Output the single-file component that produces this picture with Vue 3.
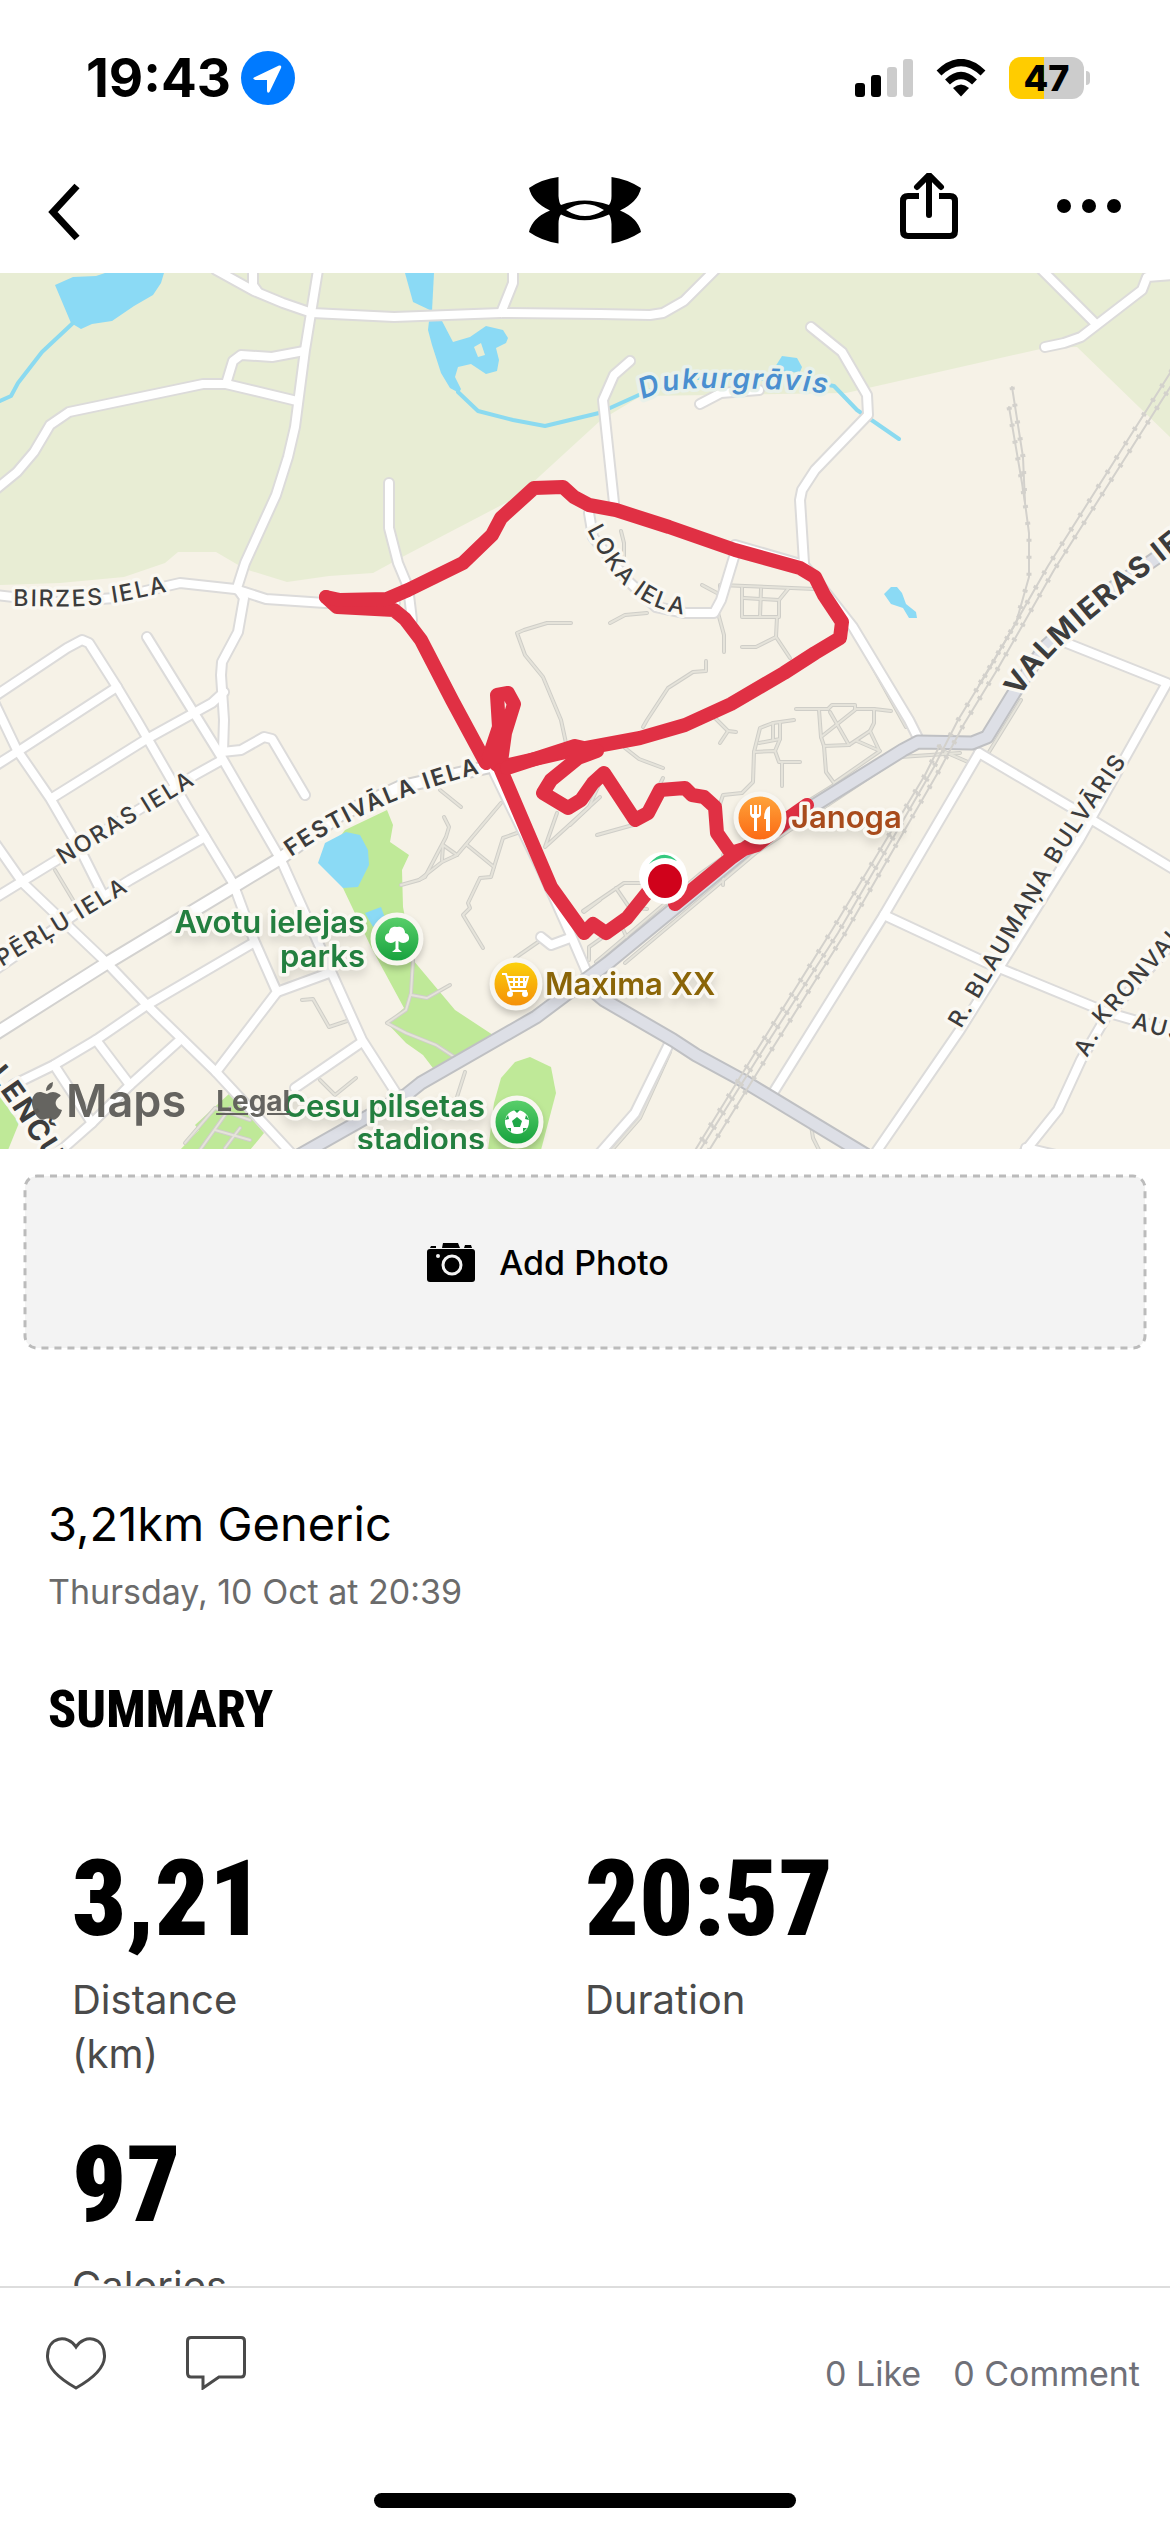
<script setup>
const water = [
  'M55 285L73 277L96 276L105 273H164L161 283L153 295L134 306L112 321L92 324L81 329L71 323Z',
  'M405 273H434L432 311L413 302Z',
  'M429 321H442L453 342L470 337L486 326L503 330L508 338L506 343L496 348L499 360L497 371L486 374L471 364L458 367L455 377L461 389L459 393L450 388L441 373L432 345L428 330ZM474 347L478 357L485 355L481 343Z',
  'M775 367L782 356L797 358L802 367L800 372L784 373Z',
  'M884 594L891 587L897 587L902 593L906 604L916 612L917 618L909 618L903 608L891 604Z',
  'M346 832L360 835L368 850L369 865L358 887L343 888L318 863L325 843Z',
  'M365 913L381 907L385 918L373 927Z'
]
const streams = [
  '73,323 42,352 18,383 11,396 0,401',
  '458,392 478,411 513,420 545,426 599,413 641,394 685,378 742,378 800,380 834,386 857,410 899,439'
]
const parks = [
  '387,810 393,825 390,842 409,855 402,870 403,907 413,960 455,1010 496,1037 436,1072 423,1055 406,1043 387,1023 404,1008 371,947 343,888 330,850 345,830',
  '515,1062 530,1057 551,1067 556,1093 541,1150 488,1150 494,1103 501,1078',
  '230,1093 195,1125 199,1130 180,1150 250,1150 264,1133',
  '0,1097 19,1123 8,1150 0,1150'
]
const paths = [
  '571,623 547,623 524,630 517,633 525,655 543,677 561,720 566,743',
  '621,531 624,543 624,563', '702,585 717,593', '720,600 720,585 815,589',
  '742,588 742,617 779,617 779,600 788,589', '761,589 760,617', '744,598 779,600',
  '777,617 776,637 790,658', '776,637 756,647 742,647', '718,613 724,635 724,652',
  '610,623 625,615 647,613', '706,661 706,671 693,672 668,688 647,720 643,727',
  '796,709 828,709', '855,709 874,709 891,711',
  '828,709 832,705 855,705 855,710 821,737 819,710', '830,712 849,745',
  '821,737 824,746 849,745 870,731 874,723 874,709',
  '857,741 880,751 834,783 826,772 824,746', '870,731 879,750',
  '794,720 773,723 760,728 754,752 753,782 742,793 723,795 718,810',
  '780,723 780,739 759,743', '773,723 773,740', '754,752 775,751 779,762 800,762',
  '782,762 782,786', '780,739 775,751', '715,718 728,731 736,732', '728,731 720,743',
  '625,748 639,759 663,768', '663,778 656,792', '633,825 597,835', '602,778 589,807 570,825',
  '583,911 624,883 643,883', '616,888 629,907 647,909', '622,927 627,938',
  '589,960 589,947 606,935', '723,855 723,885', '945,752 968,762', '1021,700 989,752',
  '811,1125 813,1138 819,1150', '440,790 461,807',
  '444,817 449,827 446,837 425,877 419,880 401,885', '501,803 457,855 442,862 419,880',
  '442,860 443,845 457,855', '467,845 494,867 491,877 480,878 468,903 470,908 463,915 483,948',
  '517,833 503,838 494,867', '515,958 541,940',
  '413,960 411,993 406,1010 387,1023 406,1033 436,1045 459,1060', '411,995 427,998 450,985',
  '302,1000 313,999 329,1027 350,1020', '320,1080 335,1095 356,1078', '465,1072 457,1097',
  '55,870 73,900', '557,813 545,847 600,797', '584,912 600,900', '853,632 870,662 906,727',
  '596,962 700,874 765,828 834,785', '625,963 757,852 900,757 960,753',
  '185,1143 215,1108 250,1120', '200,1150 230,1108', '215,1130 250,1140', '225,1148 240,1128', '670,1052 640,1118 612,1150'
]
const roads = [
  '216,270 254,291 283,303 312,313 394,317 501,313 600,314 650,315 663,313 684,301 715,270',
  '253,270 253,285 258,292',
  '318,270 305,350 295,427 288,457 276,495 245,563 237,588 244,598 238,632 222,662 221,675 224,720 223,752',
  '-5,490 17,472 34,452 50,425 69,412 203,384 226,384 297,401',
  '226,384 233,361 241,355 272,357 304,351', '501,313 513,283 513,270',
  '-5,595 57,602 115,598 180,583 235,589 266,599 325,603 395,603',
  '389,483 389,528 398,563 408,587 412,620',
  '147,637 186,700 222,758 281,860 329,967 362,1040 396,1093',
  '-5,696 67,648 82,640 89,643 117,687 138,722 187,807 233,883 254,940 277,992 216,1072',
  '117,687 17,752 -5,766', '224,692 212,703 145,740 52,798',
  '222,752 241,750 264,737 272,739 305,795', '222,760 195,775 57,860 -5,898',
  '-5,704 17,750 50,798 82,853 103,895', '-5,843 23,883 107,963 147,1005 216,1072 291,1153',
  '205,837 130,880 77,913 -5,970', '13,1085 54,1065 96,1040 147,1005 253,943',
  '277,992 329,973', '96,1040 130,1085', '180,1040 130,1085 92,1123 58,1153', '54,1065 92,1123',
  '362,1042 295,1088', '494,772 543,873 570,933 588,975', '541,937 551,945 570,938',
  '630,361 614,375 603,400 614,503',
  '811,327 842,352 867,395 868,415 815,470 802,490 800,500 804,563',
  '700,404 721,393 759,390', '1042,270 1094,322', '1045,347 1064,343 1081,337 1142,290 1147,277 1175,275',
  '589,513 593,537 627,580 656,607 685,613 714,613 721,600 734,557',
  '735,545 804,565 853,627 909,720 920,742', '1064,642 1167,683 1079,840 960,1030 874,1155',
  '979,753 1079,812 1175,870', '979,753 884,915 773,1093', '884,915 987,963 1106,1012 1175,1032',
  '1175,940 1106,1017 1081,1060 1058,1110 1022,1155', '1026,1148 1060,1156',
  '671,1040 635,1113 600,1153'
]
const mainRoads = ['-5,1034 107,963 233,887 281,858 340,815 400,787 497,765']
const highways = [
  '1175,545 1100,597 1045,647 1014,693 987,737 972,743 918,742 903,750 754,843 608,963 536,1017 421,1083 406,1095 300,1155',
  '586,985 604,1000 673,1040 696,1055 742,1080 866,1155'
]
const rails = [
  '1172,370 1048,566 991,666 958,720 934,767 838,933 761,1053 700,1150',
  '1176,378 1054,570 997,670 964,724 940,769 844,935 767,1057 708,1152',
  '940,745 925,775 832,930 755,1053 694,1152',
  '1012,387 1023,457 1025,503 1029,533 1029,577 1016,623 979,685',
  '1009,407 1022,483 1025,503'
]
const route = [
  '326,597 337,607 394,610 405,619 421,640 452,700 486,763',
  '326,597 340,600 387,599 408,590 463,563 492,535 501,518 534,488 563,487 574,497 589,505 616,510 669,527 735,550 800,568 815,577 824,595 842,622 840,638 815,653 784,673 731,704 685,725 640,738 570,751 500,767',
  '501,762 505,733 514,704 508,693 497,695 499,727 489,757 497,765',
  '501,770 551,887 584,933 593,924 606,933 627,918 647,893 662,880',
  '675,904 731,858 757,840 807,805 757,845 731,853 717,833 715,807 704,797 692,795 685,788 660,790 648,813 635,820 604,773 593,783 581,800 568,808 543,793 551,780 578,758 597,751 575,746 507,768'
]
const streets = [
  { id: 'birzes', d: 'M13 606C45 606 75 608 105 604S145 596 195 586', t: 'BIRZES IELA' },
  { id: 'noras', d: 'M63 865L220 769', t: 'NORAS IELA' },
  { id: 'perlu', d: 'M2 967L160 872', t: 'PĒRĻU IELA' },
  { id: 'festivala', d: 'M291 857C350 816 420 786 510 766', t: 'FESTIVĀLA IELA', semi: true },
  { id: 'loka', d: 'M587 530C605 562 628 620 715 616', t: 'LOKA IELA' },
  { id: 'valmieras', d: 'M1020 697C1048 648 1100 612 1210 524', t: 'VALMIERAS IELA', big: true },
  { id: 'blaumana', d: 'M961 1029L1066 850L1150 727', t: 'R. BLAUMAŅA BULVĀRIS' },
  { id: 'kronvalda', d: 'M1087 1058L1108 1020L1200 918', t: 'A. KRONVALDA' },
  { id: 'ausekla', d: 'M1131 1028L1260 1062', t: 'AUSEKĻA' },
  { id: 'lencu', d: 'M-12 1076C10 1100 24 1128 62 1186', t: 'ĻENČU', big: true }
]
const stats = [
  { value: '3,21', label: 'Distance (km)' },
  { value: '20:57', label: 'Duration' },
  { value: '97', label: 'Calories' }
]
</script>

<template>
  <div class="page">
    <div class="status">
      <div class="clock">
        <span>19:43</span>
        <svg width="54" height="54" viewBox="0 0 54 54" aria-hidden="true"><circle cx="27" cy="27" r="27" fill="#007aff" /><path d="M13 26.5L38 14.5Q41 14 40 17L28.500 41Q26.500 43 26 40V29H14.500Q11 28 13 26.500Z" fill="#fff" /></svg>
      </div>
      <div class="signals">
        <svg width="58" height="38" viewBox="0 0 58 38" aria-hidden="true"><rect y="24" width="10" height="14" rx="3" /><rect x="16" y="16" width="10" height="22" rx="3" /><rect x="32" y="8" width="10" height="30" rx="3" fill="#ccc" /><rect x="48" width="10" height="38" rx="3" fill="#ccc" /></svg>
        <svg width="50" height="38" viewBox="0 0 50 38" aria-hidden="true"><g fill="none" stroke="#000" stroke-width="7"><path d="M3 14Q25 -7 47 14" /><path d="M11.500 23Q25 10 38.500 23" /></g><path d="M17 29Q25 22 33 29L25 37.500Z" /></svg>
        <div class="battery"><b>47</b></div>
      </div>
    </div>

    <header class="bar">
      <button type="button" aria-label="Back"><svg width="34" height="58" viewBox="0 0 34 58"><path d="M29 3L5 29L29 55" fill="none" stroke="#000" stroke-width="7" /></svg></button>
      <svg class="logo" width="114" height="68" viewBox="0 0 114 68" role="img" aria-label="Under Armour"><path d="M1 12Q14 3 30.500 1V20Q31 27 33 29Q56 20 81 29Q83.500 26 83.500 20V1Q99 3 113 12Q110 26 92 34.500Q110 42 113 56Q99 65 83.500 67.500V48Q83 41 81 38.500Q56 50 33 38.500Q30.500 41 30.500 48V67.500Q14 65 1 56Q4 42 22 34.500Q4 26 1 12ZM38 34Q57 46 76 34Q57 22 38 34Z" fill-rule="evenodd" /></svg>
      <div class="tools">
        <button type="button" aria-label="Share"><svg width="58" height="78" viewBox="0 0 58 78"><g fill="none" stroke="#000" stroke-width="6"><path d="M19 23H8Q3 23 3 28V58Q3 63 8 63H50Q55 63 55 58V28Q55 23 50 23H39" /><path d="M29 42V3M17 14L29 2L41 14" stroke-linecap="round" /></g></svg></button>
        <button type="button" aria-label="More"><svg width="66" height="26" viewBox="0 0 66 26"><circle cx="8" cy="7" r="7" /><circle cx="33" cy="7" r="7" /><circle cx="58" cy="7" r="7" /></svg></button>
      </div>
    </header>

    <main>
      <div class="map">
        <svg class="canvas" viewBox="0 273 1170 876" role="img" aria-label="Workout route">
          <defs>
            <linearGradient id="green" x2="0" y2="1"><stop stop-color="#5cd16c" /><stop offset="1" stop-color="#14a03c" /></linearGradient>
            <linearGradient id="yellow" x2="0" y2="1"><stop stop-color="#fcd40c" /><stop offset="1" stop-color="#f48c08" /></linearGradient>
            <linearGradient id="orange" x2="0" y2="1"><stop stop-color="#ffa63c" /><stop offset="1" stop-color="#fb6712" /></linearGradient>
            <path v-for="s in streets" :id="s.id" :key="s.id" :d="s.d" />
            <path id="river" d="M643 400C668 385 710 388 760 389S815 391 870 403" />
          </defs>
          <rect y="273" width="1170" height="876" fill="#f6f2e7" />
          <path d="M0 273H1170V437L1077 347L1045 348L846 393L641 396L601 420L517 497L406 555L373 573L329 576L287 582L245 569L216 552H178L165 563L124 577L60 583L0 585Z" fill="#e8edd4" />
          <polygon v-for="p in parks" :key="p" :points="p" fill="#bfe998" />
          <path v-for="p in water" :key="p" :d="p" fill="#8bdaf5" />
          <g class="line">
            <polyline v-for="p in streams" :key="p" :points="p" stroke="#8bdaf0" stroke-width="4" />
            <polyline v-for="p in paths" :key="p" :points="p" stroke="#cfcec8" stroke-width="4" />
            <polyline v-for="p in paths" :key="p + 'i'" :points="p" stroke="#e5e3da" stroke-width="2" />
            <polyline v-for="p in roads" :key="p" :points="p" stroke="#dcdbda" stroke-width="12" />
            <polyline v-for="p in mainRoads" :key="p" :points="p" stroke="#d3d2d0" stroke-width="15" />
            <polyline v-for="p in roads" :key="p + 'i'" :points="p" stroke="#fff" stroke-width="8" />
            <polyline v-for="p in mainRoads" :key="p + 'i'" :points="p" stroke="#fff" stroke-width="11" />
            <polyline v-for="p in highways" :key="p" :points="p" stroke="#bfc0c3" stroke-width="15" />
            <polyline v-for="p in highways" :key="p + 'i'" :points="p" stroke="#dddfe6" stroke-width="11" />
            <polyline v-for="p in rails" :key="p" :points="p" stroke="#d3d1cc" stroke-width="2" />
            <polyline v-for="p in rails" :key="p + 't'" :points="p" class="ties" stroke="#d3d1cc" stroke-width="5" />
            <polyline v-for="p in route" :key="p" :points="p" stroke="#e03044" stroke-width="14" />
          </g>
          <circle cx="663" cy="876" r="24" fill="#fff" /><circle cx="665" cy="881" r="23" fill="#fff" />
          <path d="M649 864Q663 847 677 861Q663 854 649 864Z" fill="#35c980" />
          <circle cx="665" cy="881" r="17" fill="#d0021b" />

          <text v-for="s in streets" :key="s.id" class="street" :class="{ big: s.big, semi: s.semi }"><textPath :href="'#' + s.id">{{ s.t }}</textPath></text>
          <text class="river"><textPath href="#river">Dukurgrāvis</textPath></text>

          <g class="poi">
            <text x="365" y="933" text-anchor="end" fill="#237f3f">Avotu ielejas</text>
            <text x="365" y="967" text-anchor="end" fill="#237f3f">parks</text>
            <text x="485" y="1117" text-anchor="end" fill="#237f3f">Cesu pilsetas</text>
            <text x="485" y="1150" text-anchor="end" fill="#237f3f">stadions</text>
            <text x="545" y="995" fill="#8a6508">Maxima XX</text>
            <text x="791" y="828" fill="#a84b1c">Janoga</text>
          </g>
          <g class="pin" transform="translate(397 939)"><circle r="24" fill="url(#green)" /><path d="M-11 2A5 5 0 0 1 -8 -6A6 6 0 0 1 0 -12A6 6 0 0 1 8 -6A5 5 0 0 1 11 2Q6 6 1.500 2V10L5 13H-5L-1.500 10V2Q-6 6 -11 2Z" fill="#fff" /></g>
          <g class="pin" transform="translate(516 984)"><circle r="24" fill="url(#yellow)" /><g fill="none" stroke="#fff" stroke-width="2"><path d="M-14 -10H-10L-5 7H11M-9 -7H12L9 3H-6M-8 -2H11M-2 -7V3M3 -7V3M8 -7V3" /></g><circle cx="-6" cy="10" r="3" fill="#fff" /><circle cx="9" cy="10" r="3" fill="#fff" /></g>
          <g class="pin" transform="translate(760 818)"><circle r="24" fill="url(#orange)" /><path d="M-10 -13V-4Q-9 0 -6 0V13H-3V0Q1 -1 1 -4V-13H-1V-4H-3V-13H-6V-4H-8V-13ZM10 -12Q4 -10 4 1H6V13H10Z" fill="#fff" /></g>
          <g class="pin" transform="translate(517 1122)"><circle r="24" fill="url(#green)" /><circle r="12" fill="#fff" /><path d="M0 -5L5 -1L3 5H-3L-5 -1ZM-3 -12H3L0 -9ZM9 -7L12 -2L8 -3ZM-9 -7L-12 -2L-8 -3ZM10 6L6 10L6 6ZM-10 6L-6 10L-6 6Z" fill="#1fa848" /></g>
        </svg>
        <div class="credit">
          <svg width="30" height="38" viewBox="0 0 30 38" aria-hidden="true"><path d="M21 0Q21 8 14 9Q14 2 21 0ZM15 12Q21 8 27 12Q29 13 28.500 14Q21 19 25 25Q27 28 30 28Q28 35 23 37.500Q20 38 17 36.500Q15 36 12 37.500Q8 39 4 33Q-1 25 0 18Q2 9 9 10Q12 11 15 12Z" /></svg>
          <span>Maps</span>
          <a href="#legal">Legal</a>
        </div>
      </div>

      <button type="button" class="photo">
        <svg class="outline" aria-hidden="true"><rect width="100%" height="100%" rx="12" /></svg>
        <svg width="48" height="39" viewBox="0 0 48 39" aria-hidden="true"><path d="M16 0H31L33 5H15ZM4 3H9V5H3ZM38 2H44L45 5H37Z" /><rect y="6" width="48" height="33" rx="3" /><circle cx="25" cy="22" r="9" fill="none" stroke="#f3f3f3" stroke-width="3" /><circle cx="11" cy="13" r="2" fill="#f3f3f3" /></svg>
        <span>Add Photo</span>
      </button>

      <section class="intro">
        <h1>3,21km Generic</h1>
        <p>Thursday, 10 Oct at 20:39</p>
        <h2>SUMMARY</h2>
      </section>

      <dl class="stats">
        <div v-for="s in stats" :key="s.label">
          <dt>{{ s.label }}</dt>
          <dd>{{ s.value }}</dd>
        </div>
      </dl>
    </main>

    <footer>
      <div class="actions">
        <button type="button" aria-label="Like"><svg width="60" height="54" viewBox="0 0 60 54"><path d="M30 11C22 -2 1 0 1.500 21C2 33 14 43 30 52C46 43 58 33 58.500 21C59 0 38 -2 30 11Z" /></svg></button>
        <button type="button" aria-label="Comment"><svg width="60" height="54" viewBox="0 0 60 54"><path d="M5 1.500H55Q58.500 1.500 58.500 5V37Q58.500 41 55 41H33L17 52V41H5Q1.500 41 1.500 37V5Q1.500 1.500 5 1.500Z" /></svg></button>
        <div class="counts"><span>0 Like</span><span>0 Comment</span></div>
      </div>
      <div class="home"></div>
    </footer>
  </div>
</template>

<style>
body { margin: 0; background: #fff; }
</style>

<style scoped>
.page { height: 100vh; display: flex; flex-direction: column; background: #fff; color: #000; font-family: Inter, "Liberation Sans", sans-serif; }
button { border: 0; padding: 0; margin: 0; background: none; color: inherit; font: inherit; cursor: pointer; }
svg { display: block; }
.status { flex: none; height: 156px; box-sizing: border-box; padding: 0 86px; display: flex; justify-content: space-between; align-items: center; }
.clock, .signals { display: flex; align-items: center; }
.clock { gap: 10px; font-size: 53px; font-weight: 700; }
.signals { gap: 23px; }
.battery { position: relative; width: 75px; height: 42px; border-radius: 12px; background: linear-gradient(90deg, #ffcc00 47%, #cccccc 47%); display: flex; align-items: center; justify-content: center; font-size: 36px; }
.battery b { font-weight: 800; }
.battery::after { content: ""; position: absolute; right: -6px; top: 14px; width: 4px; height: 14px; border-radius: 0 4px 4px 0; background: #cccccc; }
.bar { flex: none; height: 117px; box-sizing: border-box; padding: 0 48px 6px; display: grid; grid-template-columns: 1fr auto 1fr; align-items: center; }
.bar > button { justify-self: start; }
.logo { margin-bottom: 4px; }
.tools { display: flex; justify-content: flex-end; align-items: center; gap: 98px; }
main { flex: 1; min-height: 0; overflow: hidden; display: flex; flex-direction: column; }
main > * { flex: none; }
.map { position: relative; }
.canvas { width: 100%; height: auto; }
.line polyline { fill: none; stroke-linejoin: round; stroke-linecap: round; }
.line .ties { stroke-linecap: butt; stroke-dasharray: 3 14; }
text { paint-order: stroke; stroke: #faf8f2; stroke-width: 7px; stroke-linejoin: round; }
.street { font-size: 23px; font-weight: 500; letter-spacing: 2px; fill: #3c3c3c; }
.semi { font-weight: 600; }
.big { font-size: 29px; font-weight: 700; }
text.river { font-size: 28px; font-weight: 600; font-style: italic; letter-spacing: 2px; fill: #4a8fd0; stroke: #e9f1ea; }
.poi { font-size: 31px; font-weight: 600; filter: drop-shadow(0 6px 4px rgba(0, 0, 0, 0.1)); }
.pin { filter: drop-shadow(0 4px 3px rgba(0, 0, 0, 0.2)); }
.pin > circle:first-child { stroke: #f8f6f0; stroke-width: 5px; }
.credit { position: absolute; left: 32px; bottom: 20px; display: flex; align-items: center; color: #5e5d59; fill: #5e5d59; opacity: 0.95; }
.credit span { margin-left: 4px; font-size: 45px; line-height: 56px; font-weight: 600; }
.credit a { margin-left: 30px; color: inherit; font-size: 28px; font-weight: 700; }
.photo { position: relative; height: 172px; margin: 27px 25px 0; padding-right: 74px; box-sizing: border-box; border-radius: 12px; background: #f3f3f3; display: flex; align-items: center; justify-content: center; gap: 24px; font-size: 34px; font-weight: 500; }
.outline { position: absolute; inset: 0; width: 100%; height: 100%; overflow: visible; fill: none; stroke: #bbbbbb; stroke-width: 3px; stroke-dasharray: 7 6; }
.intro { margin: 146px 48px 0; }
h1, h2, p, dl, dd { margin: 0; }
h1 { font-size: 47px; line-height: 60px; font-weight: 400; }
p { margin-top: 16px; font-size: 34px; line-height: 44px; color: #6b6b6b; }
h2 { margin-top: 66px; font-family: "Liberation Sans Narrow", "Roboto Condensed", "Liberation Sans", sans-serif; font-size: 52px; line-height: 60px; font-weight: 800; }
.stats { margin: 109px 72px 0; display: grid; grid-template-columns: 1fr 1fr; row-gap: 54px; }
.stats div { display: flex; flex-direction: column-reverse; justify-content: flex-end; gap: 24px; }
dt { max-width: 240px; font-size: 40px; line-height: 54px; color: #4a4a4a; }
dd { font-family: "Liberation Sans Narrow", "Roboto Condensed", "Liberation Sans", sans-serif; font-size: 106px; line-height: 100px; font-weight: 900; }
footer { flex: none; height: 246px; box-sizing: border-box; border-top: 2px solid #dddddd; background: #fff; display: flex; flex-direction: column; justify-content: space-between; padding: 48px 0 24px; }
.actions { display: flex; align-items: flex-start; gap: 80px; padding: 0 30px 0 46px; }
.actions svg { fill: none; stroke: #4a4a4a; stroke-width: 3; }
.counts { margin: 16px 0 0 auto; display: flex; gap: 32px; font-size: 34px; line-height: 44px; color: #6f7078; }
.home { align-self: center; width: 36%; height: 15px; border-radius: 8px; background: #000; }
</style>
